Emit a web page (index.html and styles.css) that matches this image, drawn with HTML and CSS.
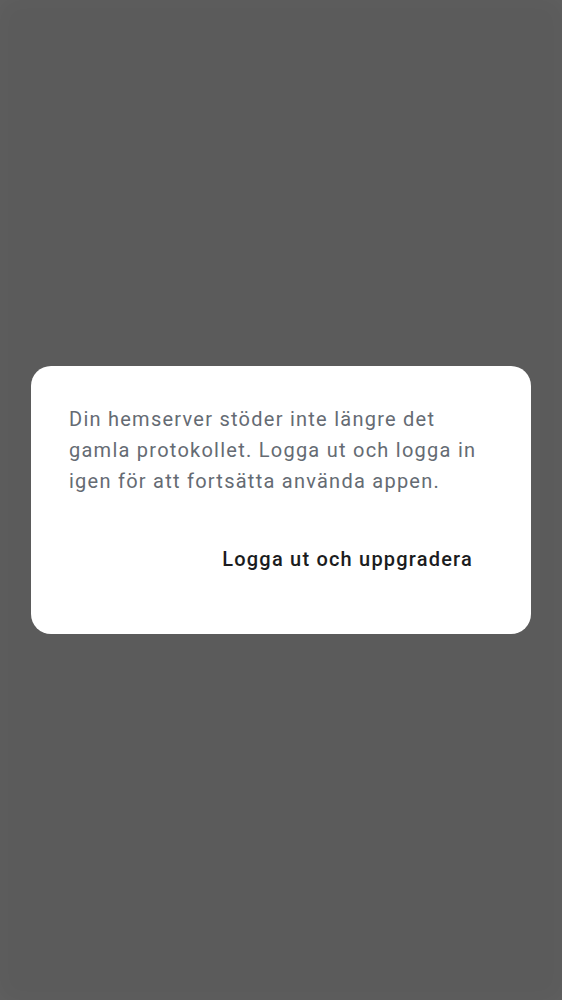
FILE: index.html
```html
<!DOCTYPE html>
<html lang="sv">
<head>
<meta charset="utf-8">
<link rel="stylesheet" href="styles.css">
</head>
<body>
<div class="screen">
  <div class="dialog">
    <p class="message">Din hemserver stöder inte längre det gamla protokollet. Logga ut och logga in igen för att fortsätta använda appen.</p>
    <div class="actions">
      <button class="action">Logga ut och uppgradera</button>
    </div>
  </div>
</div>
</body>
</html>
```
FILE: styles.css
```css
html, body {
  margin: 0;
  padding: 0;
  height: 100%;
}
body {
  background: #5b5b5b;
  font-family: Roboto, "Liberation Sans", sans-serif;
}
.screen {
  height: 1000px;
  display: flex;
  align-items: center;
  justify-content: center;
  box-shadow: inset 0 0 24px rgba(255,255,255,0.03);
}
.dialog {
  width: 500px;
  box-sizing: border-box;
  background: #ffffff;
  border-radius: 20px;
  padding: 38px 38px 51px 38px;
}
.message {
  margin: 0;
  font-size: 20px;
  line-height: 31px;
  color: #656b73;
  letter-spacing: 1.25px;
}
.actions {
  display: flex;
  justify-content: flex-end;
  margin-top: 38px;
}
.action {
  border: none;
  background: none;
  font-family: inherit;
  font-size: 20px;
  font-weight: 500;
  color: #1b1c20;
  padding: 12px 20px;
  line-height: 24px;
  letter-spacing: 1.2px;
}
```
